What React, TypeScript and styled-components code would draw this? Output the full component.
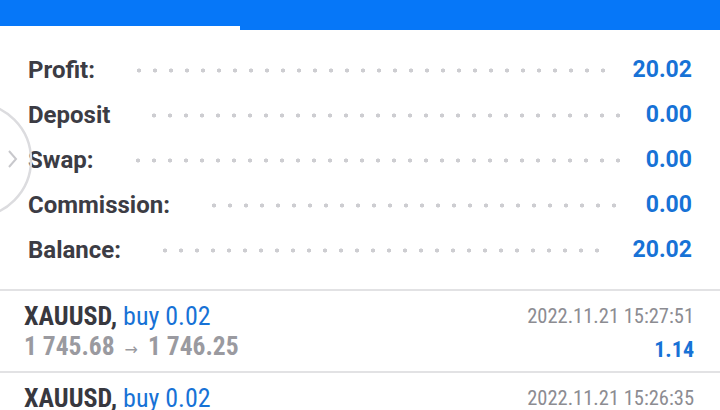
import styled, { createGlobalStyle } from "styled-components";

const GlobalStyle = createGlobalStyle`
  html, body {
    margin: 0;
    padding: 0;
    background: #ffffff;
    overflow: hidden;
  }
  body {
    font-family: Roboto, "Noto Sans", sans-serif;
  }
`;

const Screen = styled.div`
  position: relative;
  width: 720px;
  height: 410px;
  overflow: hidden;
  background: #ffffff;
`;

const TabBar = styled.div`
  display: grid;
  grid-template-columns: 240px 1fr;
  height: 30px;
`;

const Tab = styled.div<{ $active?: boolean }>`
  background: #0677f8;
  height: ${(p) => (p.$active ? "30px" : "26px")};
`;

const Summary = styled.div`
  display: flex;
  flex-direction: column;
  padding: 17px 28px 17px 28px;
`;

const SummaryRow = styled.div`
  display: flex;
  align-items: center;
  height: 45px;
  font-weight: 700;
`;

const Label = styled.span`
  font-size: 24px;
  color: #3c3c44;
  white-space: nowrap;
`;

const Leader = styled.span`
  flex: 1;
  height: 5px;
  margin: 2px 22px 0 36px;
  background-image: radial-gradient(circle, #cdcdd1 1.8px, transparent 2.3px);
  background-size: 16px 5px;
  background-repeat: repeat-x;
`;

const Value = styled.span`
  font-size: 23px;
  color: #1772d6;
  white-space: nowrap;
`;

const Divider = styled.div`
  height: 2px;
  background: #e2e2e4;
`;

const Trade = styled.div`
  display: grid;
  grid-template-columns: 1fr auto;
  padding: 10px 26px 6px 24px;
  font-family: "Liberation Sans Narrow", "Roboto Condensed", Roboto, sans-serif;
  line-height: 30px;
`;

const Symbol = styled.span`
  font-size: 26px;
  font-weight: 700;
  color: #38383f;
`;

const Side = styled.span`
  font-weight: 400;
  color: #1772d6;
`;

const Time = styled.span`
  font-size: 20.5px;
  color: #8c8c92;
  text-align: right;
  align-self: center;
`;

const Prices = styled.span`
  font-size: 25.5px;
  font-weight: 700;
  color: #9a9aa0;
`;

const Arrow = styled.span`
  font-family: "DejaVu Sans", sans-serif;
  font-size: 16px;
  font-weight: 400;
  margin: 0 10px;
`;

const Result = styled.span`
  font-size: 22px;
  font-weight: 700;
  color: #1772d6;
  text-align: right;
  align-self: end;
`;

const SideHandle = styled.svg`
  position: absolute;
  left: 0;
  top: 100px;
`;

const summary = [
  { label: "Profit:", value: "20.02" },
  { label: "Deposit", value: "0.00" },
  { label: "Swap:", value: "0.00" },
  { label: "Commission:", value: "0.00" },
  { label: "Balance:", value: "20.02" },
];

const trades = [
  { time: "2022.11.21 15:27:51", open: "1 745.68", close: "1 746.25", profit: "1.14" },
  { time: "2022.11.21 15:26:35", open: "1 745.40", close: "1 746.00", profit: "1.20" },
];

export default function App() {
  return (
    <>
      <GlobalStyle />
      <Screen>
        <TabBar>
          <Tab />
          <Tab $active />
        </TabBar>
        <Summary>
          {summary.map((row) => (
            <SummaryRow key={row.label}>
              <Label>{row.label}</Label>
              <Leader />
              <Value>{row.value}</Value>
            </SummaryRow>
          ))}
        </Summary>
        {trades.map((t) => (
          <div key={t.time}>
            <Divider />
            <Trade>
              <Symbol>
                XAUUSD, <Side>buy 0.02</Side>
              </Symbol>
              <Time>{t.time}</Time>
              <Prices>
                {t.open}
                <Arrow>→</Arrow>
                {t.close}
              </Prices>
              <Result>{t.profit}</Result>
            </Trade>
          </div>
        ))}
        <SideHandle width="40" height="120" viewBox="0 0 40 120">
          <circle cx="-26" cy="60" r="57" fill="none" stroke="#dcdcdf" strokeWidth="2.5" />
          <path d="M9 51 L16 59 L9 67" fill="none" stroke="#c8c8cc" strokeWidth="2" />
        </SideHandle>
      </Screen>
    </>
  );
}
